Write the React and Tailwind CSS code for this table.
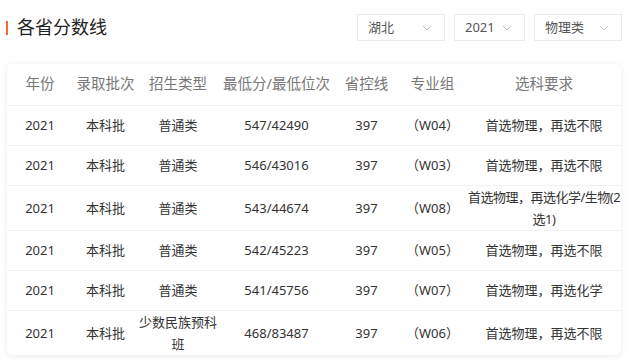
import React from 'react';

const rows = [
  ['2021', '本科批', '普通类', '547/42490', '397', '（W04）', '首选物理，再选不限'],
  ['2021', '本科批', '普通类', '546/43016', '397', '（W03）', '首选物理，再选不限'],
  ['2021', '本科批', '普通类', '543/44674', '397', '（W08）', '首选物理，再选化学/生物(2选1)'],
  ['2021', '本科批', '普通类', '542/45223', '397', '（W05）', '首选物理，再选不限'],
  ['2021', '本科批', '普通类', '541/45756', '397', '（W07）', '首选物理，再选化学'],
  ['2021', '本科批', '少数民族预科班', '468/83487', '397', '（W06）', '首选物理，再选不限'],
];

const headers = ['年份', '录取批次', '招生类型', '最低分/最低位次', '省控线', '专业组', '选科要求'];
const widths = ['w-[66px]', 'w-[65px]', 'w-[80px]', 'w-[117px]', 'w-[63px]', 'w-[69px]', 'w-[154px]'];

// 下拉框
const Select = ({ label, className }) => (
  <div className={`flex h-[27px] items-center justify-between border border-[#ebebeb] bg-white pl-[10px] pr-[12px] text-[13px] text-[#555] ${className}`}>
    <span>{label}</span>
    <svg className="h-[10px] w-[10px] text-[#bbb]" viewBox="0 0 10 10" fill="none" stroke="currentColor">
      <path strokeWidth="0.9" d="M1 3l4 4 4-4" />
    </svg>
  </div>
);

export default function App() {
  return (
    <div className="h-[362px] w-[640px] overflow-hidden bg-white font-['Noto_Sans','Noto_Sans_CJK_SC',sans-serif]">
      {/* 标题 + 筛选 */}
      <div className="flex items-center justify-between pl-[6px] pr-[18px] pt-[14px]">
        <div className="flex items-center">
          <div className="h-[14px] w-[2px] bg-[#f26b2a]"></div>
          <h1 className="ml-[9px] text-[18px] leading-[27px] text-[#222]">各省分数线</h1>
        </div>
        <div className="flex gap-[9px]">
          <Select label="湖北" className="w-[88px]" />
          <Select label="2021" className="w-[71px]" />
          <Select label="物理类" className="w-[88px]" />
        </div>
      </div>

      {/* 表格 */}
      <div className="ml-[7px] mt-[23px] w-[614px] overflow-hidden rounded-[6px] bg-white shadow-[0_1px_6px_rgba(0,0,0,0.08)]">
        <table className="w-full table-fixed border-collapse text-center">
          <colgroup>
            {widths.map((w, i) => (
              <col key={i} className={w} />
            ))}
          </colgroup>
          <thead>
            <tr className="h-[41px] border-b border-[#f0f0f0]">
              {headers.map((h) => (
                <th key={h} className="whitespace-nowrap px-0 text-[14.5px] font-normal text-[#777]">
                  {h}
                </th>
              ))}
            </tr>
          </thead>
          <tbody>
            {rows.map((r, i) => (
              <tr key={i} className={`border-[#f0f0f0] ${i < rows.length - 1 ? 'border-b' : ''} ${i === 2 || i === 5 ? 'h-[44px]' : 'h-[40px]'}`}>
                {r.map((c, j) => (
                  <td key={j} className={`break-all px-0 text-[13px] leading-[22px] text-[#333] ${j === 6 && i === 2 ? 'tracking-[-0.5px]' : ''}`}>
                    {c}
                  </td>
                ))}
              </tr>
            ))}
          </tbody>
        </table>
      </div>
    </div>
  );
}
